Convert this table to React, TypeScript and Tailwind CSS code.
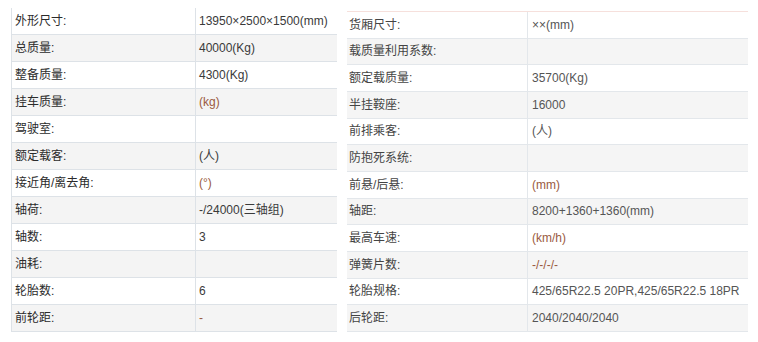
import React from "react";

type Row = { label: string; value: string; muted?: boolean };

const leftRows: Row[] = [
  { label: "外形尺寸:", value: "13950×2500×1500(mm)" },
  { label: "总质量:", value: "40000(Kg)" },
  { label: "整备质量:", value: "4300(Kg)" },
  { label: "挂车质量:", value: "(kg)", muted: true },
  { label: "驾驶室:", value: "" },
  { label: "额定载客:", value: "(人)" },
  { label: "接近角/离去角:", value: "(°)", muted: true },
  { label: "轴荷:", value: "-/24000(三轴组)" },
  { label: "轴数:", value: "3" },
  { label: "油耗:", value: "" },
  { label: "轮胎数:", value: "6" },
  { label: "前轮距:", value: "-", muted: true },
];

const rightRows: Row[] = [
  { label: "货厢尺寸:", value: "××(mm)" },
  { label: "载质量利用系数:", value: "" },
  { label: "额定载质量:", value: "35700(Kg)" },
  { label: "半挂鞍座:", value: "16000" },
  { label: "前排乘客:", value: "(人)" },
  { label: "防抱死系统:", value: "" },
  { label: "前悬/后悬:", value: "(mm)", muted: true },
  { label: "轴距:", value: "8200+1360+1360(mm)" },
  { label: "最高车速:", value: "(km/h)", muted: true },
  { label: "弹簧片数:", value: "-/-/-/-", muted: true },
  { label: "轮胎规格:", value: "425/65R22.5 20PR,425/65R22.5 18PR" },
  { label: "后轮距:", value: "2040/2040/2040" },
];

const font = "font-['Liberation_Sans','Noto_Sans_CJK_SC',sans-serif]";

const LeftTable = () => (
  <div className="mt-[8px] ml-[11px] w-[326px] border-l border-[#dde2e7]">
    {leftRows.map((r, i) => (
      <div
        key={r.label}
        className={`flex h-[27px] border-b border-[#dde2e7] ${i % 2 === 1 ? "bg-[#f4f4f4]" : "bg-white"}`}
      >
        <div className="flex w-[184px] items-center border-r border-[#dde2e7] pl-[3px] text-[#2b2b2b]">
          {r.label}
        </div>
        <div
          className={`flex flex-1 items-center pl-[3px] ${r.muted ? "text-[#9a5a40]" : "text-[#3a3a3a]"}`}
        >
          {r.value}
        </div>
      </div>
    ))}
  </div>
);

const RightTable = () => (
  <div className="mt-[11px] ml-[10px] w-[401px] border-t border-[#f6e0dc]">
    {rightRows.map((r, i) => (
      <div
        key={r.label}
        className={`flex h-[26.67px] border-b border-[#e3e7eb] ${i % 2 === 1 ? "bg-[#f5f5f5]" : "bg-white"}`}
      >
        <div className="flex w-[181px] items-center border-r border-[#e3e7eb] pl-[2px] text-[#444]">
          {r.label}
        </div>
        <div
          className={`flex flex-1 items-center pl-[4px] ${r.muted ? "text-[#9a5a40]" : "text-[#555]"}`}
        >
          {r.value}
        </div>
      </div>
    ))}
  </div>
);

export default function App() {
  return (
    <div className={`flex h-[342px] w-[758px] items-start bg-white text-[12px] leading-none ${font}`}>
      <LeftTable />
      <RightTable />
    </div>
  );
}
